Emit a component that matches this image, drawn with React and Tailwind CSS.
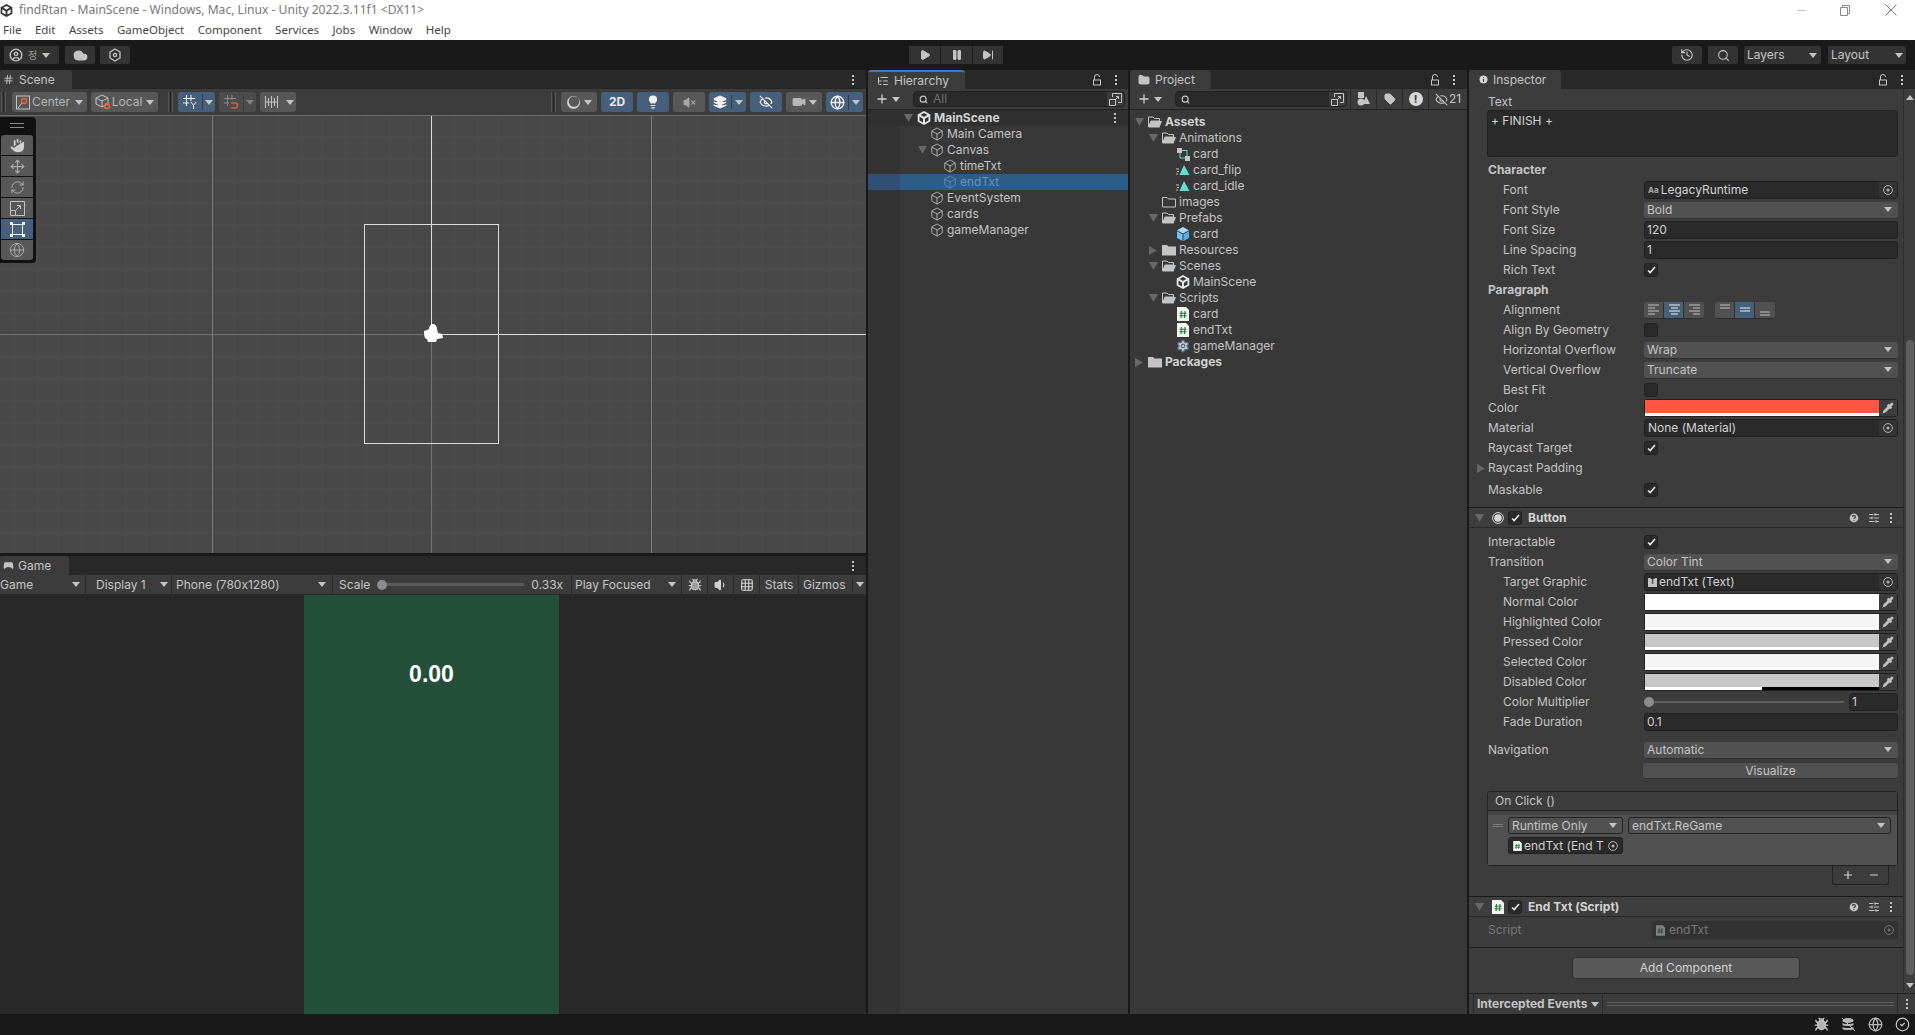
import React from 'react';
import { Box, Hand, Move, RefreshCw, Search, History, Settings, Lightbulb, EyeOff, Video, Volume1, VolumeX, Bug, Gamepad2, Info, Hash, ListTree, Folder, Play, Pause, SkipForward, Plus, Minus, Tag, Layers, Globe, CircleUser, Cloud, CircleCheck, Pipette, CircleHelp, SlidersHorizontal, Grid3x3 } from 'lucide-react';

const Caret = ({ className = 'fill-[#c4c4c4]' }) => (
    <svg width="8" height="5" viewBox="0 0 8 5" className={`shrink-0 ${className}`}><path d="M0 0h8L4 5z" /></svg>
);

const FoldDown = () => (
    <svg width="11" height="10" viewBox="0 0 11 10" className="shrink-0 fill-[#686868]"><path d="M1 1h9L5.5 9z" /></svg>
);

const FoldRight = () => (
    <svg width="10" height="11" viewBox="0 0 10 11" className="shrink-0 fill-[#686868]"><path d="M1 1v9l8-4.5z" /></svg>
);

const Kebab = ({ className = '' }) => (
    <div className={`flex flex-col gap-[2px] w-[2px] shrink-0 ${className}`}>
        <div className="h-[2px] w-[2px] bg-[#c4c4c4]" />
        <div className="h-[2px] w-[2px] bg-[#c4c4c4]" />
        <div className="h-[2px] w-[2px] bg-[#c4c4c4]" />
    </div>
);

const SmallLock = () => (
    <svg width="10" height="12" viewBox="0 0 10 12" fill="none" stroke="#c4c4c4" strokeWidth="1" className="shrink-0">
        <rect x="1.5" y="6" width="7" height="5" />
        <path d="M2.5 6V3a2.5 2.5 0 0 1 5 0" />
    </svg>
);

const Grip = () => (
    <div className="flex gap-px h-[20px] shrink-0">
        <div className="w-px bg-[#555]" />
        <div className="w-px bg-[#232323]" />
        <div className="w-px bg-[#555]" />
    </div>
);

const UnityIcon = ({ size = 14, color = '#e6e6e6' }) => (
    <svg width={size} height={size} viewBox="0 0 14 14" fill="none" stroke={color} className="shrink-0">
        <path d="M7 1l5.4 3v6L7 13l-5.4-3V4z" strokeWidth="1.8" />
        <path d="M7 7.2V13M7 7.2L2 4.2M7 7.2l5-3" strokeWidth="2" />
    </svg>
);

const FolderOpen = () => (
    <svg width="14" height="12" viewBox="0 0 14 12" className="shrink-0">
        <path d="M.5 1h4.5l1.5 1.5h5V5H3L.5 11z" fill="none" stroke="#c4c4c4" />
        <path d="M3 5h11l-2.5 6.5H.5z" fill="#c4c4c4" />
    </svg>
);

const FolderLine = () => (
    <svg width="14" height="12" viewBox="0 0 14 12" fill="none" stroke="#c4c4c4" className="shrink-0">
        <path d="M.5 1.5h4.5l1.5 1.5h7v8H.5z" />
    </svg>
);

const FolderFill = () => (
    <svg width="14" height="12" viewBox="0 0 14 12" fill="#c4c4c4" className="shrink-0">
        <path d="M0 1h5l1.5 1.5H14V11.5H0z" />
    </svg>
);

const ClipIcon = () => (
    <svg width="14" height="12" viewBox="0 0 14 12" className="shrink-0">
        <path d="M8 1l5.5 10h-10z" fill="#5fe3cf" />
        <path d="M0 5h3M1 7.5h2M0 10h2" stroke="#c4c4c4" />
    </svg>
);

const ControllerIcon = () => (
    <svg width="13" height="13" viewBox="0 0 13 13" className="shrink-0">
        <rect x="0" y="0" width="5" height="5" fill="#c4c4c4" />
        <rect x="8" y="8" width="5" height="5" fill="#c4c4c4" />
        <path d="M5 2.5h5V8M3 5v5h5" stroke="#5fe3cf" fill="none" />
    </svg>
);

const PrefabIcon = () => (
    <svg width="14" height="14" viewBox="0 0 14 14" className="shrink-0">
        <path d="M7 0l6 3.2-6 3.2-6-3.2z" fill="#a5dcfb" />
        <path d="M1 4.2l5.5 3V14L1 11z" fill="#6cc3f3" />
        <path d="M13 4.2l-5.5 3V14l5.5-3z" fill="#57b1e6" />
    </svg>
);

const ScriptIcon = ({ dim = false, width = 12, height = 14 }) => (
    <svg width={width} height={height} viewBox="0 0 12 14" className={`shrink-0 ${dim ? 'opacity-40' : ''}`}>
        <path d="M0 0h9l3 3v11H0z" fill="#f4f4f4" />
        <path d="M4.5 4L4 11M8 4l-.5 7M2.5 6.2h7M2.5 8.8h7" stroke="#1f7a32" strokeWidth="1.1" />
    </svg>
);

const GearIcon = () => <Settings size={14} className="shrink-0 text-[#5f6f80] fill-[#c9d3dd]" strokeWidth={2.4} />;

const TargetDot = ({ dim = false }) => (
    <svg width="10" height="10" viewBox="0 0 10 10" fill="none" className={`shrink-0 ${dim ? 'opacity-50' : ''}`}>
        <circle cx="5" cy="5" r="4.4" stroke="#b4b4b4" />
        <circle cx="5" cy="5" r="1.5" fill="#b4b4b4" />
    </svg>
);

const Check = () => (
    <div className="flex h-[14px] w-[14px] shrink-0 items-center justify-center rounded-[3px] border border-[#212121] bg-[#2a2a2a]">
        <svg width="9" height="8" viewBox="0 0 9 8" fill="none" stroke="#e8e8e8" strokeWidth="1.6"><path d="M1 4.5l2.2 2L8 1" /></svg>
    </div>
);

const NoCheck = () => <div className="h-[14px] w-[14px] shrink-0 rounded-[3px] border border-[#212121] bg-[#2a2a2a]" />;

const BarBtn = ({ children, className = 'bg-[#585858]' }) => (
    <div className={`flex h-5 shrink-0 items-center justify-center rounded-[3px] ${className}`}>{children}</div>
);

const Row = ({ label, sub, dim, className = 'h-5', children }) => (
    <div className={`flex items-center pr-[5px] ${className}`}>
        <div className={`w-[175px] shrink-0 whitespace-nowrap ${sub ? 'pl-[34px]' : 'pl-[19px]'} ${dim ? 'text-[#7a7a7a]' : ''}`}>{label}</div>
        <div className="flex min-w-0 flex-1 items-center">{children}</div>
    </div>
);

const Dropdown = ({ value, className = 'w-full', inset = 'pl-[3px] pr-[6px]' }) => (
    <div className={`flex h-[17px] items-center justify-between rounded-[3px] border-b border-[#303030] bg-[#515151] ${inset} ${className}`}>
        <span className="whitespace-nowrap">{value}</span>
        <Caret />
    </div>
);

const Field = ({ value }) => (
    <div className="flex h-[18px] w-full items-center rounded-[3px] border border-[#212121] bg-[#2a2a2a] pl-[2px] text-[#d2d2d2]">{value}</div>
);

const ObjField = ({ icon, value }) => (
    <div className="flex h-[18px] w-full items-center rounded-[3px] border border-[#212121] bg-[#2a2a2a] text-[#d2d2d2]">
        <div className="flex min-w-0 flex-1 items-center gap-[2px] pl-[3px]">{icon}<span className="whitespace-nowrap">{value}</span></div>
        <div className="flex h-full w-[18px] items-center justify-center bg-[#333]"><TargetDot /></div>
    </div>
);

const ColorField = ({ color, alpha = 'bg-white' }) => (
    <div className="flex h-[18px] w-full items-stretch rounded-[3px] border border-[#212121] bg-[#2a2a2a]">
        <div className="flex flex-1 flex-col">
            <div className={`flex-1 ${color}`} />
            <div className={`h-[3px] ${alpha}`} />
        </div>
        <div className="flex w-[18px] items-center justify-center bg-[#3c3c3c]">
            <Pipette size={12} className="text-[#c4c4c4] fill-[#c4c4c4]" />
        </div>
    </div>
);

const AlignIcon = ({ mode, active }) => {
    const rows = { left: ['M2 3h11', 'M2 6h7', 'M2 9h11', 'M2 12h7'], center: ['M3 3h11', 'M5 6h7', 'M3 9h11', 'M5 12h7'], right: ['M3 3h11', 'M7 6h7', 'M3 9h11', 'M7 12h7'], top: ['M3 3h10', 'M3 6h10'], mid: ['M3 6h10', 'M3 9h10'], bot: ['M3 10h10', 'M3 13h10'] }[mode];
    return (
        <div className={`flex h-[16px] w-[20px] items-center justify-center border-r border-[#2e2e2e] last:border-r-0 ${active ? 'bg-[#46607c]' : 'bg-[#515151]'}`}>
            <svg width="16" height="15" viewBox="0 0 16 15" fill="none" stroke={active ? '#f0f0f0' : '#c4c4c4'}>
                {rows.map(d => <path key={d} d={d} />)}
            </svg>
        </div>
    );
};

const ComponentHeader = ({ icon, title }) => (
    <div className="flex h-[21px] items-center border-t border-b border-t-[#1a1a1a] border-b-[#2a2a2a] bg-[#3e3e3e] pl-[5px] pr-[11px]">
        <FoldDown />
        <div className="ml-[5px] flex w-[15px] justify-center">{icon}</div>
        <div className="ml-[3px]"><Check /></div>
        <span className="ml-[6px] font-bold text-[#d2d2d2]">{title}</span>
        <CircleHelp size={12} className="ml-auto text-[#3e3e3e] fill-[#c4c4c4]" strokeWidth={2.5} />
        <SlidersHorizontal size={12} className="ml-[8px] text-[#c4c4c4]" />
        <Kebab className="ml-[10px]" />
    </div>
);

const hierarchy = [
    { name: 'Main Camera', depth: 1 },
    { name: 'Canvas', depth: 1, open: true },
    { name: 'timeTxt', depth: 2 },
    { name: 'endTxt', depth: 2, selected: true },
    { name: 'EventSystem', depth: 1 },
    { name: 'cards', depth: 1 },
    { name: 'gameManager', depth: 1 },
];

const project = [
    { name: 'Assets', depth: 0, fold: 'down', icon: <FolderOpen />, bold: true },
    { name: 'Animations', depth: 1, fold: 'down', icon: <FolderOpen /> },
    { name: 'card', depth: 2, icon: <ControllerIcon /> },
    { name: 'card_flip', depth: 2, icon: <ClipIcon /> },
    { name: 'card_idle', depth: 2, icon: <ClipIcon /> },
    { name: 'images', depth: 1, icon: <FolderLine /> },
    { name: 'Prefabs', depth: 1, fold: 'down', icon: <FolderOpen /> },
    { name: 'card', depth: 2, icon: <PrefabIcon /> },
    { name: 'Resources', depth: 1, fold: 'right', icon: <FolderFill /> },
    { name: 'Scenes', depth: 1, fold: 'down', icon: <FolderOpen /> },
    { name: 'MainScene', depth: 2, icon: <UnityIcon /> },
    { name: 'Scripts', depth: 1, fold: 'down', icon: <FolderOpen /> },
    { name: 'card', depth: 2, icon: <ScriptIcon /> },
    { name: 'endTxt', depth: 2, icon: <ScriptIcon /> },
    { name: 'gameManager', depth: 2, icon: <GearIcon /> },
    { name: 'Packages', depth: 0, fold: 'right', icon: <FolderFill />, bold: true },
];

const menus = ['File', 'Edit', 'Assets', 'GameObject', 'Component', 'Services', 'Jobs', 'Window', 'Help'];

const SearchBox = ({ placeholder, className }) => (
    <div className={`flex h-[16px] items-center rounded-[4px] border border-[#212121] bg-[#2a2a2a] ${className}`}>
        <Search size={9} className="ml-[5px] text-[#c4c4c4]" strokeWidth={3} />
        <span className="ml-[5px] flex-1 text-[#6f6f6f]">{placeholder}</span>
        <div className="flex h-full w-[17px] items-center justify-center rounded-r-[4px] bg-[#3c3c3c]">
            <svg width="13" height="13" viewBox="0 0 13 13" fill="none" stroke="#c4c4c4"><path d="M3.5 4V.5h9v9H9M.5 6.5h6v6h-6zM6 7l3.5-3.5M7 3.5h2.5V6" /></svg>
        </div>
    </div>
);

const AddMenu = () => (
    <div className="flex w-[37px] shrink-0 items-center gap-[3px] pl-[7px]">
        <Plus size={14} className="text-[#d2d2d2]" strokeWidth={2.2} />
        <Caret />
    </div>
);

const SceneGrid = () => (
    <svg className="block h-full w-full" width="866" height="437">
        <defs>
            <pattern id="sceneGrid" x="14.5" y="20.5" width="22" height="22" patternUnits="userSpaceOnUse">
                <path d="M0 0V22M0 0H22" stroke="#535353" strokeWidth="1" />
            </pattern>
        </defs>
        <rect width="866" height="437" fill="#484848" />
        <rect width="866" height="437" fill="url(#sceneGrid)" />
        <path d="M212.5 0V437M651.5 0V437" stroke="#7a7a7a" />
        <path d="M431.5 218V437M0 218.5H423" stroke="#727272" />
        <path d="M431.5 0V210M436 218.5H866" stroke="#dcdcdc" />
        <rect x="364.5" y="108.5" width="134" height="219" fill="none" stroke="#dcdcdc" />
        <path transform="translate(0 2)" d="M424 213c2-1 4-1 5-2 0-3 2-5 4-5s4 2 4 5l1 4 4 1 1 4-6 1-1 3h-8l-1-3c-3 0-3-6-3-8z" fill="#fff" />
    </svg>
);

const App = () => {
    return (
        <div className="flex h-[1035px] w-[1915px] flex-col overflow-hidden bg-[#191919] font-['Inter','Noto_Sans_CJK_KR',sans-serif] text-[12px] leading-[14px] text-[#c4c4c4] [font-feature-settings:'calt'_0]">
            {/* Titlebar */}
            <div className="flex h-5 items-center bg-white font-['Noto_Sans','Noto_Sans_CJK_KR',sans-serif] text-[#777]">
                <UnityIcon size={13} color="#333" />
                <span className="ml-[6px] text-[12.1px]">findRtan - MainScene - Windows, Mac, Linux - Unity 2022.3.11f1 &lt;DX11&gt;</span>
                <Minus size={13} className="ml-auto text-[#888]" strokeWidth={1} />
                <svg width="10" height="11" viewBox="0 0 10 11" fill="none" stroke="#888" className="ml-[32px]"><path d="M.5 2.5h7v8h-7zM2.5 2.5v-2h7v8h-2" /></svg>
                <svg width="12" height="12" viewBox="0 0 12 12" stroke="#777" className="ml-[35px] mr-[18px]"><path d="M.5.5l11 11M11.5.5l-11 11" /></svg>
            </div>
            <div className="flex h-5 items-center gap-[13.5px] bg-white pl-[3px] font-['Noto_Sans','Noto_Sans_CJK_KR',sans-serif] text-[11.5px] text-[#444]">
                {menus.map(m => <span key={m}>{m}</span>)}
            </div>

            {/* Main toolbar */}
            <div className="flex h-[30px] items-center pl-1 pr-[9px]">
                <div className="flex h-[18px] w-[55px] items-center gap-[5px] rounded-[2px] bg-[#333] pl-[5px]">
                    <CircleUser size={14} className="text-[#c4c4c4]" strokeWidth={2.4} />
                    <span className="text-[10px] text-[#9a9a9a]">정</span>
                    <Caret />
                </div>
                <div className="ml-[6px] flex h-[18px] w-[30px] items-center justify-center rounded-[2px] bg-[#333]">
                    <Cloud size={15} className="fill-[#c4c4c4] text-[#c4c4c4]" />
                </div>
                <div className="ml-[5px] flex h-[18px] w-[30px] items-center justify-center rounded-[2px] bg-[#333]">
                    <svg width="12" height="14" viewBox="0 0 12 14" fill="none" stroke="#c4c4c4" strokeWidth="1.3"><path d="M6 1l5 3v6l-5 3-5-3V4z" /><circle cx="6" cy="7" r="1.6" /></svg>
                </div>
                <div className="ml-[779px] flex h-[18px] items-center gap-px">
                    <div className="flex h-full w-[31px] items-center justify-center bg-[#333]"><Play size={12} className="fill-[#c4c4c4] text-[#c4c4c4]" /></div>
                    <div className="flex h-full w-[31px] items-center justify-center bg-[#333]"><Pause size={12} className="fill-[#c4c4c4] text-[#c4c4c4]" /></div>
                    <div className="flex h-full w-[30px] items-center justify-center bg-[#333]"><SkipForward size={12} className="fill-[#c4c4c4] text-[#c4c4c4]" /></div>
                </div>
                <div className="ml-auto flex h-[18px] w-[30px] items-center justify-center rounded-[2px] bg-[#333]"><History size={14} className="text-[#c4c4c4]" /></div>
                <div className="ml-[6px] flex h-[18px] w-[30px] items-center justify-center rounded-[2px] bg-[#333]"><Search size={13} className="text-[#c4c4c4]" /></div>
                <div className="ml-[6px] flex h-[18px] w-[77px] items-center justify-between rounded-[2px] bg-[#333] pl-[3px] pr-[4px]"><span>Layers</span><Caret /></div>
                <div className="ml-[7px] flex h-[18px] w-[78px] items-center justify-between rounded-[2px] bg-[#333] pl-[3px] pr-[3px]"><span>Layout</span><Caret /></div>
            </div>

            {/* Panels */}
            <div className="flex h-[944px] gap-[2px]">
                <div className="flex w-[866px] shrink-0 flex-col gap-[3px]">
                    {/* Scene */}
                    <div className="flex h-[483px] flex-col">
                        <div className="flex h-[19px] items-stretch bg-[#282828]">
                            <div className="flex w-[72px] items-center gap-[5px] rounded-t-[3px] bg-[#3c3c3c] pl-[3px]">
                                <Hash size={11} className="text-[#c4c4c4]" />
                                <span>Scene</span>
                            </div>
                            <Kebab className="ml-auto mr-[12px] self-center" />
                        </div>
                        <div className="flex h-[27px] items-center border-b border-[#6a6a6a] bg-[#3c3c3c] pl-[1px]">
                            <Grip />
                            <BarBtn className="ml-[6px] w-[75px] gap-[2px] bg-[#585858]">
                                <svg width="14" height="15" viewBox="0 0 14 15" fill="none" className="shrink-0"><rect x=".5" y="1" width="13" height="13" stroke="#c4c4c4" /><path d="M2 13l4-5" stroke="#c4c4c4" /><circle cx="8" cy="6" r="2.5" stroke="#f0643c" strokeWidth="1.4" /></svg>
                                <span className="text-[#b4b4b4]">Center</span>
                                <span className="ml-[3px]"><Caret /></span>
                            </BarBtn>
                            <BarBtn className="ml-1 w-[67px] gap-[1px] bg-[#585858]">
                                <svg width="16" height="16" viewBox="0 0 16 16" fill="none" className="shrink-0"><path d="M7 1l6 3v6l-6 3-6-3V4zM1 4l6 3 6-3M7 7v6" stroke="#c4c4c4" /><circle cx="12" cy="12" r="2.5" stroke="#f0643c" strokeWidth="1.4" /></svg>
                                <span className="text-[#b4b4b4]">Local</span>
                                <span className="ml-[3px]"><Caret /></span>
                            </BarBtn>
                            <div className="ml-[10px]"><Grip /></div>
                            <BarBtn className="ml-[5px] w-[37px] bg-[#46607c]">
                                <div className="flex flex-1 justify-center border-r border-[#2e3f52]">
                                    <svg width="16" height="16" viewBox="0 0 16 16" fill="none" stroke="#f0f0f0"><path d="M4.5 1v11M9 1v6M1 4.5h12M1 9h6M9 8l2.5 3.5L14 8M11.5 11.5V15" /></svg>
                                </div>
                                <div className="flex w-[12px] justify-center"><Caret /></div>
                            </BarBtn>
                            <BarBtn className="ml-1 w-[37px] bg-[#4c4c4c]">
                                <div className="flex flex-1 justify-center border-r border-[#3c3c3c]">
                                    <svg width="16" height="16" viewBox="0 0 16 16" fill="none"><path d="M4.5 1v11M9 1v5M1 4.5h12M1 9h5" stroke="#8c8c8c" /><path d="M8 9h4a2.5 2.5 0 0 1 0 5H8" stroke="#d0603a" strokeWidth="1.4" /></svg>
                                </div>
                                <div className="flex w-[12px] justify-center"><Caret className="fill-[#808080]" /></div>
                            </BarBtn>
                            <BarBtn className="ml-1 w-[36px] bg-[#585858]">
                                <div className="flex flex-1 justify-center">
                                    <svg width="16" height="14" viewBox="0 0 16 14" fill="none" stroke="#c4c4c4"><path d="M1.5 1v12M4.5 3v8M7.5 1v12M10.5 3v8M13.5 1v12M1 7h13" /></svg>
                                </div>
                                <div className="flex w-[12px] justify-center"><Caret /></div>
                            </BarBtn>
                            <div className="ml-[255px]"><Grip /></div>
                            <BarBtn className="ml-[5px] w-[36px] gap-[3px] bg-[#585858]">
                                <svg width="15" height="15" viewBox="0 0 15 15"><circle cx="7.5" cy="7.5" r="6.5" fill="#d0d0d0" /><circle cx="8" cy="6.5" r="5.2" fill="#585858" /></svg>
                                <Caret />
                            </BarBtn>
                            <BarBtn className="ml-1 w-[32px] bg-[#46607c]"><span className="font-bold text-[#e8e8e8]">2D</span></BarBtn>
                            <BarBtn className="ml-1 w-[32px] bg-[#46607c]"><Lightbulb size={14} className="fill-[#f0f0f0] text-[#f0f0f0]" /></BarBtn>
                            <BarBtn className="ml-1 w-[32px] bg-[#585858]"><VolumeX size={13} className="fill-[#a8a8a8] text-[#a8a8a8]" /></BarBtn>
                            <BarBtn className="ml-1 w-[37px] bg-[#46607c]">
                                <div className="flex flex-1 justify-center border-r border-[#2e3f52]"><Layers size={14} className="fill-[#f0f0f0] text-[#f0f0f0]" /></div>
                                <div className="flex w-[14px] justify-center"><Caret /></div>
                            </BarBtn>
                            <BarBtn className="ml-1 w-[32px] bg-[#46607c]"><EyeOff size={14} className="text-[#f0f0f0]" /></BarBtn>
                            <BarBtn className="ml-1 w-[36px] gap-[3px] bg-[#585858]"><Video size={14} className="fill-[#b8b8b8] text-[#b8b8b8]" /><Caret /></BarBtn>
                            <BarBtn className="ml-1 w-[37px] bg-[#46607c]">
                                <div className="flex flex-1 justify-center border-r border-[#2e3f52]"><Globe size={15} className="text-[#f0f0f0]" strokeWidth={2.2} /></div>
                                <div className="flex w-[14px] justify-center"><Caret /></div>
                            </BarBtn>
                        </div>
                        <div className="relative min-h-0 flex-1">
                            <SceneGrid />
                            {/* Tool overlay */}
                            <div className="absolute left-0 top-px flex w-[36px] flex-col gap-px rounded-r-[4px] bg-[#111] pb-[3px] pl-px">
                                <div className="flex h-[17px] flex-col items-center justify-center gap-[3px] pr-[3px]">
                                    <div className="h-px w-[14px] bg-[#8a8a8a]" />
                                    <div className="h-px w-[14px] bg-[#8a8a8a]" />
                                </div>
                                <div className="flex h-5 w-[32px] items-center justify-center rounded-t-[3px] bg-[#585858]"><Hand size={17} className="fill-[#d0d0d0] text-[#585858]" strokeWidth={1.4} /></div>
                                <div className="flex h-5 w-[32px] items-center justify-center bg-[#585858]"><Move size={15} className="text-[#a8a8a8]" /></div>
                                <div className="flex h-5 w-[32px] items-center justify-center bg-[#585858]"><RefreshCw size={15} className="text-[#b4b4b4]" strokeWidth={1.5} /></div>
                                <div className="flex h-5 w-[32px] items-center justify-center bg-[#585858]">
                                    <svg width="15" height="15" viewBox="0 0 15 15" fill="none" stroke="#c4c4c4"><path d="M.5 9V.5h14v14H6M.5 9.5h5v5h-5zM6 9l4-4M7 4.5h3.5V8" /></svg>
                                </div>
                                <div className="flex h-5 w-[32px] items-center justify-center bg-[#46607c]">
                                    <svg width="15" height="15" viewBox="0 0 15 15" fill="#f0f0f0" stroke="#f0f0f0"><path d="M2.5 2.5h10v10h-10z" fill="none" /><rect x="0" y="0" width="3" height="3" stroke="none" /><rect x="12" y="0" width="3" height="3" stroke="none" /><rect x="0" y="12" width="3" height="3" stroke="none" /><rect x="12" y="12" width="3" height="3" stroke="none" /></svg>
                                </div>
                                <div className="flex h-5 w-[32px] items-center justify-center rounded-b-[3px] bg-[#585858]"><Globe size={16} className="text-[#a8a8a8]" strokeWidth={1.5} /></div>
                            </div>
                        </div>
                    </div>

                    {/* Game */}
                    <div className="flex min-h-0 flex-1 flex-col">
                        <div className="flex h-[19px] shrink-0 items-stretch bg-[#282828]">
                            <div className="flex w-[69px] items-center gap-[3px] rounded-t-[3px] bg-[#3c3c3c] pl-[2px]">
                                <Gamepad2 size={13} className="fill-[#c4c4c4] text-[#3c3c3c]" />
                                <span>Game</span>
                            </div>
                            <Kebab className="ml-auto mr-[12px] self-center" />
                        </div>
                        <div className="flex h-5 shrink-0 items-center border-b border-[#2a2a2a] bg-[#3c3c3c]">
                            <div className="flex h-full w-[86px] items-center justify-between border-r border-[#2a2a2a] pr-[5px]"><span>Game</span><Caret /></div>
                            <div className="flex h-full w-[86px] items-center justify-between border-r border-[#2a2a2a] pl-[10px] pr-[3px]"><span>Display 1</span><Caret /></div>
                            <div className="flex h-full w-[161px] items-center justify-between border-r border-[#2a2a2a] pl-[4px] pr-[6px]"><span>Phone (780x1280)</span><Caret /></div>
                            <div className="flex h-full w-[239px] items-center border-r border-[#2a2a2a] pl-[6px]">
                                <span>Scale</span>
                                <div className="ml-[7px] h-[10px] w-[10px] rounded-full bg-[#8c8c8c]" />
                                <div className="h-[3px] w-[137px] bg-[#5a5a5a]" />
                                <span className="ml-[7px]">0.33x</span>
                            </div>
                            <div className="flex h-full w-[110px] items-center justify-between border-r border-[#2a2a2a] pl-[3px] pr-[5px]"><span>Play Focused</span><Caret /></div>
                            <div className="flex h-full w-[26px] items-center justify-center border-r border-[#2a2a2a]"><Bug size={14} className="fill-[#9c9c9c] text-[#c4c4c4]" /></div>
                            <div className="flex h-full w-[26px] items-center justify-center border-r border-[#2a2a2a]"><Volume1 size={14} className="fill-[#d2d2d2] text-[#d2d2d2]" /></div>
                            <div className="flex h-full w-[26px] items-center justify-center border-r border-[#2a2a2a]"><Grid3x3 size={14} className="text-[#d2d2d2]" /></div>
                            <div className="flex h-full w-[39px] items-center justify-center border-r border-[#2a2a2a]">Stats</div>
                            <div className="flex h-full flex-1 items-center pl-[4px]">
                                <span>Gizmos</span>
                                <div className="ml-[6px] h-[14px] w-px bg-[#2a2a2a]" />
                                <span className="ml-[3px]"><Caret /></span>
                            </div>
                        </div>
                        <div className="flex min-h-0 flex-1 justify-center bg-[#282828] pr-[3px]">
                            <div className="flex h-full w-[255px] justify-center bg-[#244f3a] pt-[67px]">
                                <span className="font-['Liberation_Sans',sans-serif] text-[23px] font-bold leading-[24px] text-white">0.00</span>
                            </div>
                        </div>
                    </div>
                </div>

                {/* Hierarchy */}
                <div className="flex w-[260px] shrink-0 flex-col">
                    <div className="flex h-[19px] shrink-0 items-stretch bg-[#282828]">
                        <div className="flex w-[97px] items-center gap-[5px] rounded-t-[3px] border-t-2 border-[#3a79bb] bg-[#3c3c3c] pl-[9px]">
                            <ListTree size={12} className="text-[#c4c4c4]" />
                            <span>Hierarchy</span>
                        </div>
                        <div className="ml-auto mr-[11px] flex items-center gap-[13px]"><SmallLock /><Kebab /></div>
                    </div>
                    <div className="flex h-[21px] shrink-0 items-center border-b border-[#232323] bg-[#3c3c3c]">
                        <AddMenu />
                        <SearchBox placeholder="All" className="ml-[8px] w-[212px]" />
                    </div>
                    <div className="flex min-h-0 flex-1 flex-col bg-[#383838]">
                        <div className="flex h-[16px] shrink-0 items-center bg-[#303030]">
                            <div className="flex w-[46px] justify-end"><FoldDown /></div>
                            <div className="ml-[3px]"><UnityIcon /></div>
                            <span className="ml-[3px] font-bold text-[#d2d2d2]">MainScene</span>
                            <Kebab className="ml-auto mr-[12px]" />
                        </div>
                        {hierarchy.map(row => (
                            <div key={row.name} className={`flex h-[16px] shrink-0 items-stretch ${row.selected ? 'bg-[#2c5d87]' : ''}`}>
                                <div className={`w-[32px] shrink-0 ${row.selected ? 'bg-[#2f4f75]' : 'bg-[#333]'}`} />
                                <div className="flex items-center" style={{ paddingLeft: 17 + (row.depth - 1) * 13 }}>
                                    <div className="flex w-[13px] shrink-0">{row.open && <FoldDown />}</div>
                                    <Box size={14} strokeWidth={1.4} className={`shrink-0 ${row.selected ? 'text-[#6a93b5]' : 'text-[#c4c4c4]'}`} />
                                    <span className={`ml-[3px] ${row.selected ? 'text-[#6a93b5]' : ''}`}>{row.name}</span>
                                </div>
                            </div>
                        ))}
                        <div className="flex min-h-0 flex-1"><div className="w-[32px] bg-[#333]" /></div>
                    </div>
                </div>

                {/* Project */}
                <div className="flex w-[337px] shrink-0 flex-col">
                    <div className="flex h-[19px] shrink-0 items-stretch bg-[#282828]">
                        <div className="flex w-[81px] items-center gap-[5px] rounded-t-[3px] bg-[#3c3c3c] pl-[8px]">
                            <Folder size={12} className="fill-[#c4c4c4] text-[#c4c4c4]" />
                            <span>Project</span>
                        </div>
                        <div className="ml-auto mr-[12px] flex items-center gap-[13px]"><SmallLock /><Kebab /></div>
                    </div>
                    <div className="flex h-[21px] shrink-0 items-center border-b border-[#232323] bg-[#3c3c3c]">
                        <AddMenu />
                        <SearchBox placeholder="" className="ml-[8px] w-[172px]" />
                        <div className="ml-[3px] flex h-full w-[26px] items-center justify-center border-l border-[#2a2a2a]">
                            <svg width="13" height="14" viewBox="0 0 13 14" fill="#c4c4c4"><path d="M1 0h6v6H1z" /><circle cx="4" cy="10" r="3.5" /><path d="M9 4l4 8H6z" /></svg>
                        </div>
                        <div className="flex h-full w-[26px] items-center justify-center border-l border-[#2a2a2a]"><Tag size={12} className="fill-[#c4c4c4] text-[#c4c4c4]" /></div>
                        <div className="flex h-full w-[26px] items-center justify-center border-l border-[#2a2a2a]">
                            <div className="flex h-[14px] w-[14px] items-center justify-center rounded-full bg-[#d8d8d8] text-[11px] font-bold text-[#3c3c3c]">!</div>
                        </div>
                        <div className="flex h-full flex-1 items-center justify-center gap-px border-l border-[#2a2a2a]"><EyeOff size={13} className="text-[#c4c4c4]" /><span>21</span></div>
                    </div>
                    <div className="flex min-h-0 flex-1 flex-col bg-[#383838] pt-[4px]">
                        {project.map((row, i) => (
                            <div key={i} className="flex h-[16px] shrink-0 items-center" style={{ paddingLeft: 4 + row.depth * 14 }}>
                                <div className="flex w-[14px] shrink-0">{row.fold === 'down' ? <FoldDown /> : row.fold === 'right' ? <FoldRight /> : null}</div>
                                <div className="flex w-[14px] shrink-0 justify-center">{row.icon}</div>
                                <span className={`ml-[3px] ${row.bold ? 'font-bold text-[#d2d2d2]' : ''}`}>{row.name}</span>
                            </div>
                        ))}
                    </div>
                </div>

                {/* Inspector */}
                <div className="flex min-w-0 flex-1 flex-col">
                    <div className="flex h-[19px] shrink-0 items-stretch bg-[#282828]">
                        <div className="flex w-[92px] items-center gap-[4px] rounded-t-[3px] bg-[#3c3c3c] pl-[9px]">
                            <Info size={11} className="fill-[#d8d8d8] text-[#3c3c3c]" strokeWidth={2.5} />
                            <span>Inspector</span>
                        </div>
                        <div className="ml-auto mr-[12px] flex items-center gap-[13px]"><SmallLock /><Kebab /></div>
                    </div>
                    <div className="flex min-h-0 flex-1 bg-[#3c3c3c]">
                        <div className="min-w-0 flex-1">
                            <div className="flex h-[21px] items-center pl-[19px] pt-[4px]">Text</div>
                            <div className="ml-[18px] mr-[5px] h-[47px] rounded-[3px] border border-[#212121] bg-[#2a2a2a] pl-[3px] pt-[3px] text-[#d2d2d2]">+ FINISH +</div>
                            <div className="mt-[3px] flex h-5 items-center pl-[19px] font-bold">Character</div>
                            <Row label="Font" sub><ObjField icon={<span className="text-[8px] font-bold text-[#aaa]">Aa</span>} value="LegacyRuntime" /></Row>
                            <Row label="Font Style" sub><Dropdown value="Bold" /></Row>
                            <Row label="Font Size" sub><Field value="120" /></Row>
                            <Row label="Line Spacing" sub><Field value="1" /></Row>
                            <Row label="Rich Text" sub><Check /></Row>
                            <div className="flex h-5 items-center pl-[19px] font-bold">Paragraph</div>
                            <Row label="Alignment" sub>
                                <div className="flex overflow-hidden rounded-[3px] border-b border-[#2e2e2e]">
                                    <AlignIcon mode="left" /><AlignIcon mode="center" active /><AlignIcon mode="right" />
                                </div>
                                <div className="ml-[11px] flex overflow-hidden rounded-[3px] border-b border-[#2e2e2e]">
                                    <AlignIcon mode="top" /><AlignIcon mode="mid" active /><AlignIcon mode="bot" />
                                </div>
                            </Row>
                            <Row label="Align By Geometry" sub><NoCheck /></Row>
                            <Row label="Horizontal Overflow" sub><Dropdown value="Wrap" /></Row>
                            <Row label="Vertical Overflow" sub><Dropdown value="Truncate" /></Row>
                            <Row label="Best Fit" sub><NoCheck /></Row>
                            <div className="-mt-[2px]"><Row label="Color"><ColorField color="bg-[#ff5544]" /></Row></div>
                            <Row label="Material"><ObjField value="None (Material)" /></Row>
                            <Row label="Raycast Target"><Check /></Row>
                            <div className="relative flex h-5 items-center pl-[19px]">
                                <div className="absolute left-[7px]"><FoldRight /></div>
                                Raycast Padding
                            </div>
                            <div className="mt-[2px]"><Row label="Maskable"><Check /></Row></div>

                            <div className="mt-[7px]">
                                <ComponentHeader
                                    title="Button"
                                    icon={<svg width="12" height="12" viewBox="0 0 12 12"><circle cx="6" cy="6" r="5.4" fill="none" stroke="#d8d8d8" /><circle cx="6" cy="6" r="3.8" fill="#d8d8d8" /></svg>}
                                />
                            </div>
                            <div className="mt-[4px]"><Row label="Interactable"><Check /></Row></div>
                            <Row label="Transition"><Dropdown value="Color Tint" /></Row>
                            <Row label="Target Graphic" sub>
                                <ObjField icon={<div className="flex h-[9px] w-[9px] items-center justify-center bg-[#c4c4c4] text-[7px] font-bold text-[#333]">T</div>} value="endTxt (Text)" />
                            </Row>
                            <Row label="Normal Color" sub><ColorField color="bg-white" /></Row>
                            <Row label="Highlighted Color" sub><ColorField color="bg-[#f5f5f5]" /></Row>
                            <Row label="Pressed Color" sub><ColorField color="bg-[#c8c8c8]" /></Row>
                            <Row label="Selected Color" sub><ColorField color="bg-[#f5f5f5]" /></Row>
                            <Row label="Disabled Color" sub><ColorField color="bg-[#c8c8c8]" alpha="bg-[linear-gradient(to_right,#fff_50%,#000_50%)]" /></Row>
                            <Row label="Color Multiplier" sub>
                                <div className="h-[10px] w-[10px] shrink-0 rounded-full bg-[#8c8c8c]" />
                                <div className="h-[2px] w-[190px] bg-[#5e5e5e]" />
                                <div className="ml-[5px] flex-1"><Field value="1" /></div>
                            </Row>
                            <Row label="Fade Duration" sub><Field value="0.1" /></Row>
                            <div className="mt-[8px]"><Row label="Navigation"><Dropdown value="Automatic" /></Row></div>
                            <div className="ml-[174px] mr-[5px] mt-[3px] flex h-[16px] items-center justify-center rounded-[3px] border-b border-[#2e2e2e] bg-[#515151]">Visualize</div>

                            <div className="ml-[18px] mr-[5px] mt-[12px] h-[75px] rounded-[3px] border border-[#232323]">
                                <div className="flex h-[18px] items-center bg-[#3c3c3c] pl-[7px]">On Click ()</div>
                                <div className="h-[55px] border-t border-[#232323] bg-[#505050]">
                                    <div className="flex h-[4px] bg-[#444]" />
                                    <div className="flex items-center pl-[5px] pt-[2px]">
                                        <div className="flex h-[3px] w-[10px] flex-col justify-between">
                                            <div className="h-px bg-[#7a7a7a]" />
                                            <div className="h-px bg-[#7a7a7a]" />
                                        </div>
                                        <div className="ml-[5px] flex h-[17px] w-[115px] items-center justify-between rounded-[3px] border border-[#232323] bg-[#515151] pl-[3px] pr-[5px]"><span>Runtime Only</span><Caret /></div>
                                        <div className="ml-[5px] flex h-[17px] w-[263px] items-center justify-between rounded-[3px] border border-[#232323] bg-[#515151] pl-[3px] pr-[5px]"><span>endTxt.ReGame</span><Caret /></div>
                                    </div>
                                    <div className="ml-[20px] mt-[3px] flex h-[17px] w-[115px] items-center rounded-[3px] border border-[#212121] bg-[#2a2a2a] text-[#d2d2d2]">
                                        <div className="ml-[4px]"><ScriptIcon width={9} height={10} /></div>
                                        <span className="ml-[2px] w-[80px] overflow-hidden whitespace-nowrap">endTxt (End T:</span>
                                        <div className="flex w-[18px] justify-center"><TargetDot /></div>
                                    </div>
                                </div>
                            </div>
                            <div className="ml-[363px] flex h-[19px] w-[57px] items-center justify-center gap-[14px] rounded-b-[3px] border border-t-0 border-[#232323] bg-[#3c3c3c]">
                                <Plus size={12} className="text-[#d2d2d2]" strokeWidth={2.4} />
                                <Minus size={12} className="text-[#d2d2d2]" strokeWidth={2.4} />
                            </div>

                            <div className="mt-[11px]"><ComponentHeader title="End Txt (Script)" icon={<ScriptIcon />} /></div>
                            <div className="mt-[3px] flex h-5 items-center pr-[5px]">
                                <div className="w-[183px] shrink-0 pl-[19px] text-[#787878]">Script</div>
                                <div className="flex h-[18px] flex-1 items-center rounded-[3px] bg-[#323232] text-[#787878]">
                                    <div className="ml-[4px]"><ScriptIcon dim width={9} height={11} /></div>
                                    <span className="ml-[4px] flex-1">endTxt</span>
                                    <div className="flex w-[18px] justify-center"><TargetDot dim /></div>
                                </div>
                            </div>
                            <div className="mt-[7px] border-t border-[#1f1f1f] pt-[9px]">
                                <div className="ml-[103px] flex h-[22px] w-[228px] items-center justify-center rounded-[3px] border border-[#2e2e2e] bg-[#585858] text-[#d2d2d2]">Add Component</div>
                            </div>
                        </div>

                        {/* Scrollbar */}
                        <div className="flex w-[12px] shrink-0 flex-col items-center border-l border-[#2e2e2e] bg-[#3e3e3e]">
                            <svg width="8" height="5" viewBox="0 0 8 5" className="mt-[6px] shrink-0 fill-[#c4c4c4]"><path d="M0 5h8L4 0z" /></svg>
                            <div className="mt-[240px] h-[635px] w-[8px] shrink-0 rounded-[4px] bg-[#5f5f5f]" />
                            <div className="mt-[8px]"><Caret /></div>
                        </div>
                    </div>
                    <div className="flex h-[21px] shrink-0 items-stretch border-t border-[#232323] bg-[#3c3c3c] pl-[4px]">
                        <div className="flex w-[131px] items-center gap-[4px] border-x border-[#2a2a2a] pl-[3px] font-bold">Intercepted Events <Caret /></div>
                        <div className="ml-[4px] flex w-[289px] flex-col justify-center gap-[2px]">
                            <div className="h-px bg-[#5c5c5c]" />
                            <div className="h-px bg-[#5c5c5c]" />
                        </div>
                        <div className="ml-[3px] flex w-[18px] items-center justify-center border-l border-[#2a2a2a]"><Kebab /></div>
                    </div>
                </div>
            </div>

            {/* Status bar */}
            <div className="flex h-[21px] items-center justify-end gap-[12px] pr-[5px]">
                <Bug size={15} className="fill-[#b0b0b0] text-[#c4c4c4]" />
                <svg width="15" height="15" viewBox="0 0 15 15" fill="#b8b8b8" stroke="#191919"><ellipse cx="7" cy="3.5" rx="6" ry="3" /><path d="M1 5v3c0 2 12 2 12 0V5c0 2-12 2-12 0zM1 9v3c0 2 12 2 12 0V9c0 2-12 2-12 0z" /><path d="M1 1l13 13" stroke="#c4c4c4" /></svg>
                <Globe size={15} className="text-[#b8b8b8]" />
                <CircleCheck size={15} className="text-[#c4c4c4]" />
            </div>
        </div>
    );
};

export default App;
